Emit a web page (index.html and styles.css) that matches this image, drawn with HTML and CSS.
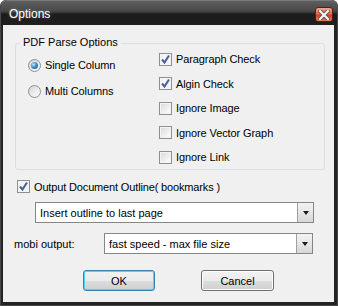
FILE: index.html
```html
<!DOCTYPE html>
<html lang="en">
<head>
    <meta charset="UTF-8">
    <title>Options</title>
    <link rel="stylesheet" href="styles.css">
</head>
<body>
    <div class="window">
        <!-- Title bar -->
        <div class="titlebar">
            <span class="title">Options</span>
            <span class="close">
                <svg width="12" height="10" viewBox="0 0 12 10">
                    <path d="M2 1 L10 9 M10 1 L2 9" stroke="#6a4a46" stroke-width="4" stroke-linecap="square"/>
                    <path d="M2 1 L10 9 M10 1 L2 9" stroke="#f4f4f4" stroke-width="2.2" stroke-linecap="square"/>
                </svg>
            </span>
        </div>

        <div class="client">
            <!-- PDF Parse Options -->
            <div class="group">
                <span class="group-label">PDF Parse Options</span>
                <div class="radios">
                    <div class="opt"><span class="radio on"></span>Single Column</div>
                    <div class="opt"><span class="radio"></span>Multi Columns</div>
                </div>
                <div class="checks">
                    <div class="opt"><span class="check on"></span>Paragraph Check</div>
                    <div class="opt"><span class="check on"></span>Algin Check</div>
                    <div class="opt"><span class="check"></span>Ignore Image</div>
                    <div class="opt"><span class="check"></span>Ignore Vector Graph</div>
                    <div class="opt"><span class="check"></span>Ignore Link</div>
                </div>
            </div>

            <div class="opt outline"><span class="check on"></span>Output Document Outline( bookmarks )</div>

            <div class="combo outline-combo">
                <span class="combo-text">Insert outline to last page</span>
                <span class="combo-btn"></span>
            </div>

            <div class="mobi-row">
                <span class="mobi-label">mobi output:</span>
                <div class="combo mobi-combo">
                    <span class="combo-text">fast speed - max file size</span>
                    <span class="combo-btn"></span>
                </div>
            </div>

            <div class="buttons">
                <button class="btn default">OK</button>
                <button class="btn cancel">Cancel</button>
            </div>
        </div>
    </div>
</body>
</html>
```

FILE: styles.css
```css
html, body {
    margin: 0;
    padding: 0;
    background: #fff;
}
body {
    font-family: "Liberation Sans", Arial, sans-serif;
    font-size: 11px;
    color: #000;
}
.window {
    width: 338px;
    height: 306px;
    box-sizing: border-box;
    display: flex;
    flex-direction: column;
    background: #232323;
    border: 1px solid #4a4a4a;
    border-top: none;
    border-radius: 6px 6px 0 0;
    padding: 0 3px 3px 2px;
}
.titlebar {
    height: 25px;
    margin: 0 -3px 0 -2px;
    padding: 0 4px 0 8px;
    display: flex;
    align-items: center;
    justify-content: space-between;
    border-radius: 6px 6px 0 0;
    border-top: 1px solid #7a7a7a;
    box-sizing: border-box;
    background: linear-gradient(to bottom, #5e5e5e 0, #484848 10px, #303030 12px, #1c1c1c 13px, #1e1e1e 24px);
}
.title {
    color: #fff;
    font-size: 12px;
    margin-top: 1px;
    text-shadow: 0 0 3px rgba(255, 255, 255, 0.35);
}
.close {
    width: 18px;
    height: 15px;
    box-sizing: border-box;
    margin-top: 3px;
    border: 1px solid #5a1e14;
    border-radius: 3px;
    background: linear-gradient(to bottom, #f0a592 0, #e06a52 45%, #cc4329 55%, #e07a5c 100%);
    display: flex;
    align-items: center;
    justify-content: center;
}
.client {
    flex: 1;
    background: #f0f0f0;
    padding-left: 11px;
    display: flex;
    flex-direction: column;
    align-items: flex-start;
}
.group {
    position: relative;
    width: 310px;
    height: 127px;
    box-sizing: border-box;
    margin: 18px 0 0 1px;
    border: 1px solid #d5dfe5;
    border-radius: 3px;
    display: flex;
}
.group-label {
    position: absolute;
    top: -8px;
    left: 4px;
    padding: 0 3px;
    background: #f0f0f0;
}
.radios {
    width: 131px;
    padding: 8px 0 0 12px;
}
.radios .opt {
    height: 26px;
}
.checks {
    padding-top: 3px;
}
.checks .opt {
    height: 24.5px;
}
.opt {
    display: flex;
    align-items: center;
    gap: 4px;
    white-space: nowrap;
    letter-spacing: -0.1px;
}
.check {
    width: 13px;
    height: 13px;
    box-sizing: border-box;
    border: 1px solid #8e8f8f;
    background: linear-gradient(135deg, #d8d8d8 0, #f4f4f4 70%, #fbfbfb 100%);
    box-shadow: inset 0 0 0 1px #f4f4f4;
    flex: none;
}
.check.on {
    background: #f4f4f4 url("data:image/svg+xml;utf8,<svg xmlns='http://www.w3.org/2000/svg' width='11' height='11'><path d='M2 5.5 L4.5 8.5 L9 1.5' fill='none' stroke='%234a5f97' stroke-width='2'/></svg>") no-repeat center;
}
.radio {
    width: 13px;
    height: 13px;
    box-sizing: border-box;
    border: 1px solid #8e8f8f;
    border-radius: 50%;
    background: linear-gradient(135deg, #d4d4d4 0, #f6f6f6 80%);
    flex: none;
    position: relative;
}
.radio.on::after {
    content: "";
    position: absolute;
    left: 2px;
    top: 2px;
    width: 7px;
    height: 7px;
    border-radius: 50%;
    background: radial-gradient(circle at 35% 35%, #c6e6fa 0, #3c8fcf 45%, #0d4f8c 100%);
}
.outline {
    margin: 10px 0 0 3px;
    height: 13px;
    letter-spacing: -0.15px;
}
.combo {
    height: 21px;
    box-sizing: border-box;
    border: 1px solid #868686;
    background: #fff;
    display: flex;
    align-items: center;
}
.combo-text {
    flex: 1;
    padding-left: 4px;
    white-space: nowrap;
}
.combo-btn {
    width: 16px;
    height: 19px;
    box-sizing: border-box;
    border-left: 1px solid #a0a0a0;
    background: linear-gradient(to bottom, #f3f3f3 0, #e6e6e6 50%, #d6d6d6 100%);
    display: flex;
    align-items: center;
    justify-content: center;
}
.combo-btn::after {
    content: "";
    border-left: 3.5px solid transparent;
    border-right: 3.5px solid transparent;
    border-top: 4px solid #1a1a1a;
    margin-top: 1px;
}
.outline-combo {
    width: 279px;
    margin: 9px 0 0 21px;
}
.mobi-row {
    display: flex;
    align-items: center;
    margin-top: 10px;
}
.mobi-label {
    width: 90px;
}
.mobi-combo {
    width: 209px;
}
.buttons {
    display: flex;
    gap: 46px;
    margin: 16px 0 0 69px;
}
.btn {
    width: 72px;
    height: 21px;
    padding: 0;
    font-family: inherit;
    font-size: 11px;
    color: #000;
    border: 1px solid #707070;
    border-radius: 3px;
    background: linear-gradient(to bottom, #f2f2f2 0, #ebebeb 50%, #dddddd 51%, #cfcfcf 100%);
    box-shadow: inset 0 0 0 1px #fcfcfc;
}
.btn.default {
    border-color: #3c7fb1;
    box-shadow: inset 0 0 0 1px #48d6fb;
}
.btn.cancel {
    width: 73px;
}
```
